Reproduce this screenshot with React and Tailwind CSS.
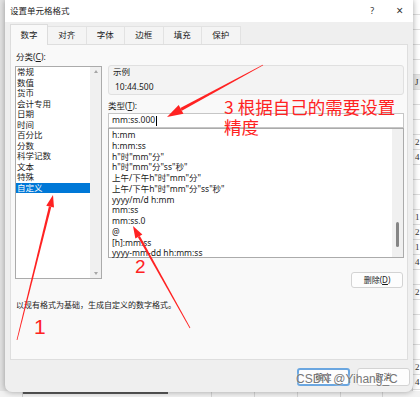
import React from 'react'

const categories = ['常规', '数值', '货币', '会计专用', '日期', '时间', '百分比', '分数', '科学记数', '文本', '特殊', '自定义']

const types = [
  'h:mm',
  'h:mm:ss',
  'h"时"mm"分"',
  'h"时"mm"分"ss"秒"',
  '上午/下午h"时"mm"分"',
  '上午/下午h"时"mm"分"ss"秒"',
  'yyyy/m/d h:mm',
  'mm:ss',
  'mm:ss.0',
  '@',
  '[h]:mm:ss',
  'yyyy-mm-dd hh:mm:ss',
]

const tabs = ['数字', '对齐', '字体', '边框', '填充', '保护']

// cells of the sheet that peeks out on the right
const sheetRows = ['', '', '', '', '', 'J', '', '', '', '2', '4', '', '', '', '1', '2', '1', '4', '', '2', '', '', '', '', '2', '4', '']

const RED = '#ff2222'

// tapered arrow, thin at the tail and wider near the head
const Arrow = ({ x1, y1, x2, y2, len = 11, half = 4, w1 = 0.8, w2 = 2.4 }) => {
  const dx = x2 - x1
  const dy = y2 - y1
  const d = Math.hypot(dx, dy)
  const ux = dx / d
  const uy = dy / d
  const nx = -uy
  const ny = ux
  const bx = x2 - ux * len
  const by = y2 - uy * len
  const shaft = [
    [x1 + (nx * w1) / 2, y1 + (ny * w1) / 2],
    [bx + (nx * w2) / 2, by + (ny * w2) / 2],
    [bx - (nx * w2) / 2, by - (ny * w2) / 2],
    [x1 - (nx * w1) / 2, y1 - (ny * w1) / 2],
  ]
  const head = [
    [x2, y2],
    [bx + nx * half, by + ny * half],
    [bx - nx * half, by - ny * half],
  ]
  const toPts = (arr) => arr.map((p) => p.join(',')).join(' ')
  return (
    <g fill={RED}>
      <polygon points={toPts(shaft)} />
      <polygon points={toPts(head)} />
    </g>
  )
}

const App = () => {
  return (
    <div className="relative w-[420px] h-[397px] overflow-hidden bg-[#e4e4e4] font-['Noto_Sans','Noto_Sans_CJK_SC',sans-serif] text-[#1b1b1b]">
      {/* sheet behind, right side */}
      <div className="absolute right-0 top-0 w-[8px] h-full bg-white flex flex-col border-l border-[#d0d0d0]">
        {sheetRows.map((t, i) => (
          <div
            key={i}
            className={`h-[15px] shrink-0 border-b border-[#dedede] pl-[2px] text-[9px] leading-[14px] text-[#333] font-['Liberation_Serif',serif] ${t === 'J' ? 'bg-[#e8e8e8]' : ''}`}
          >
            {t}
          </div>
        ))}
      </div>

      {/* sheet behind, bottom */}
      <div className="absolute left-0 bottom-0 w-full h-[6px] bg-[#f2f2f2] flex">
        <div className="w-[23px] border-r border-[#cfcfcf]" />
        <div className="w-[145px] border-t-[3px] border-[#5a5a5a]" />
        <div className="w-[44px] border-r border-[#d4d4d4]" />
        <div className="w-[43px] border-r border-[#d4d4d4]" />
        <div className="w-[43px] border-r border-[#d4d4d4]" />
        <div className="w-[43px] border-r border-[#d4d4d4]" />
        <div className="w-[42px] border-r border-[#d4d4d4]" />
      </div>

      {/* dialog */}
      <div className="relative ml-[5px] w-[408px] h-[392px] bg-[#efefef] rounded-b-[7px] shadow-[0_0_6px_rgba(0,0,0,0.35)] flex flex-col">
        <div className="h-[22px] bg-white flex items-center pl-[5px] pr-[10px]">
          <span className="text-[8.5px]">设置单元格格式</span>
          <span className="ml-auto text-[9px] text-[#333]">?</span>
          <span className="ml-[22px] text-[12px] leading-none text-[#333]">×</span>
        </div>

        <div className="flex items-end h-[22px] pl-[5px]">
          {tabs.map((t, i) => (
            <div
              key={t}
              className={
                i === 0
                  ? 'relative z-10 -mb-px w-[38px] h-[21px] bg-[#f9f9f9] border border-b-0 border-[#dcdcdc] flex items-center justify-center text-[8.5px]'
                  : 'w-[38.5px] h-[18px] bg-[#f4f4f4] border border-b-0 border-l-0 border-[#e2e2e2] flex items-center justify-center text-[8.5px]'
              }
            >
              {t}
            </div>
          ))}
        </div>

        <div className="mx-[5px] h-[316px] bg-[#f9f9f9] border border-[#dedede] flex flex-col">
          <div className="flex h-[243px] pl-[4px] pr-[3px] gap-[6px]">
            {/* category column */}
            <div className="w-[87px] flex flex-col">
              <div className="mt-[6px] ml-[1px] h-[11px] text-[8.5px] leading-[11px]">
                分类(<span className="underline">C</span>):
              </div>
              <div className="mt-[4px] h-[213px] bg-white border border-[#ababab] flex">
                <div className="flex-1 flex flex-col">
                  {categories.map((c) => (
                    <div
                      key={c}
                      className={`h-[10.5px] pl-[1px] text-[8.5px] leading-[10.5px] ${c === '自定义' ? 'bg-[#0078d7] text-white' : ''}`}
                    >
                      {c}
                    </div>
                  ))}
                </div>
                <div className="w-[11px] bg-[#f0f0f0] flex flex-col items-center justify-between py-[3px]">
                  <div className="w-0 h-0 border-l-[2.5px] border-r-[2.5px] border-b-[3px] border-l-transparent border-r-transparent border-b-[#a6a6a6]" />
                  <div className="w-0 h-0 border-l-[2.5px] border-r-[2.5px] border-t-[3px] border-l-transparent border-r-transparent border-t-[#a6a6a6]" />
                </div>
              </div>
            </div>

            {/* type column */}
            <div className="w-[296px] flex flex-col">
              <div className="mt-[20px] h-[30px] bg-[#f3f3f3] border border-[#e0e0e0] rounded-[3px] pl-[4px]">
                <div className="text-[8.5px] leading-[11px]">示例</div>
                <div className="mt-[4px] ml-[2px] text-[8.5px] leading-[11px]">10:44.500</div>
              </div>
              <div className="mt-[5px] h-[11px] text-[8.5px] leading-[11px]">
                类型(<span className="underline">T</span>):
              </div>
              <div className="mt-[2px] h-[15px] bg-white border border-[#c6c6c6] flex items-center pl-[3px] text-[8.5px]">
                mm:ss.000
                <span className="ml-[1px] w-px h-[10px] bg-black" />
              </div>
              <div className="h-[130px] bg-white border border-[#ababab] flex">
                <div className="flex-1 flex flex-col pt-px pl-[3px]">
                  {types.map((t) => (
                    <div key={t} className="h-[10.75px] text-[8.5px] leading-[10.75px] whitespace-nowrap">
                      {t}
                    </div>
                  ))}
                </div>
                <div className="w-[11px] bg-[#f0f0f0] flex justify-center">
                  <div className="mt-[93px] w-[3px] h-[25px] rounded-full bg-[#858585]" />
                </div>
              </div>
              <div className="mt-[14px] self-end mr-px w-[52px] h-[16px] bg-[#fdfdfd] border border-[#d3d3d3] rounded-[3px] flex items-center justify-center text-[8px]">
                删除(<span className="underline">D</span>)
              </div>
            </div>
          </div>
          <div className="mt-[12px] pl-[5px] text-[8px] leading-[10px]">以现有格式为基础，生成自定义的数字格式。</div>
        </div>

        <div className="mt-[8px] flex justify-end gap-[7px] pr-[3px]">
          <div className="w-[53px] h-[18px] bg-[#fdfdfd] border-2 border-[#6aa6e0] rounded-[3px] flex items-center justify-center text-[8px]">
            确定
          </div>
          <div className="w-[53px] h-[18px] bg-[#fdfdfd] border border-[#d3d3d3] rounded-[3px] flex items-center justify-center text-[8px]">
            取消
          </div>
        </div>
      </div>

      {/* red annotations */}
      <svg className="absolute inset-0 pointer-events-none" width="420" height="397" viewBox="0 0 420 397">
        <Arrow x1={17} y1={340} x2={53} y2={195} len={12} half={4} />
        <Arrow x1={190} y1={328} x2={133} y2={226} len={12} half={4} />
        <Arrow x1={263} y1={65} x2={167} y2={117} len={16} half={5} w2={3} />
      </svg>
      <div className="absolute left-[224px] top-[97px] text-[17.5px] leading-[20px] text-[#ff2222] font-['Noto_Sans_CJK_SC',sans-serif]">
        <div>3 根据自己的需要设置</div>
        <div>精度</div>
      </div>
      <div className="absolute left-[135px] top-[255px] text-[19px] leading-[24px] text-[#ff2222] font-['Liberation_Sans',sans-serif]">
        2
      </div>
      <div className="absolute left-[34px] top-[314px] text-[21px] leading-[26px] text-[#ff2222] font-['Liberation_Sans',sans-serif]">
        1
      </div>

      {/* watermark */}
      <div className="absolute left-[296px] top-[371px] text-[12px] leading-[16px] text-[#777] font-['Liberation_Sans',sans-serif] [text-shadow:0_0_2px_#fff]">
        CSDN @Yihang_C
      </div>
    </div>
  )
}

export default App
